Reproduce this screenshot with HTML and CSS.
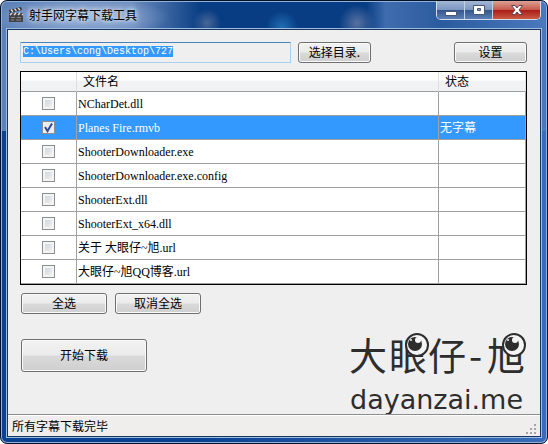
FILE: index.html
```html
<!DOCTYPE html>
<html lang="zh-CN">
<head>
<meta charset="utf-8">
<title>射手网字幕下载工具</title>
<link rel="stylesheet" href="styles.css">
</head>
<body>
<div class="window">
  <header class="titlebar">
    <svg class="app-icon" width="16" height="16" viewBox="0 0 16 16" aria-hidden="true">
      <path d="M1 3L13 0l1 3L2 6z" fill="#333"/>
      <path d="M3 2.6l2 2M6.500 1.800l2 2M10 1l2 2" stroke="#ddd" stroke-width="1.500"/>
      <path d="M1 6h14v9H1z" fill="#444"/>
      <path d="M2 8l2-2M6 8l2-2M10 8l2-2M14 8l1-1" stroke="#ddd" stroke-width="1.500"/>
      <path d="M3 10.500h4M9 10.500h4M3 13h3M8 13h5" stroke="#888"/>
    </svg>
    <h1 class="title">射手网字幕下载工具</h1>
    <div class="window-controls">
      <button class="control" type="button" aria-label="最小化">
        <svg width="12" height="12" viewBox="0 0 12 12"><path d="M.5 7.500h11v4H.5z" fill="#fff" stroke="#4b5677"/></svg>
      </button>
      <button class="control" type="button" aria-label="最大化">
        <svg width="12" height="12" viewBox="0 0 12 12"><path d="M.5 1.500h11v9H.5zM4.500 4.500v2h3v-2z" fill="#fff" fill-rule="evenodd" stroke="#4b5677"/></svg>
      </button>
      <button class="control control-close" type="button" aria-label="关闭">
        <svg width="12" height="12" viewBox="0 0 12 12"><path d="M.5 1.500h3.500l2 2.500 2-2.500h3.500L8 6l3.500 4.500H8L6 8l-2 2.500H.5L4 6z" fill="#fff" stroke="#5b4656"/></svg>
      </button>
    </div>
  </header>
  <div class="client">
    <main class="content">
      <div class="toolbar">
        <input class="path" id="path" type="text" aria-label="目录" value="C:\Users\cong\Desktop\727" spellcheck="false">
        <button class="button" type="button">选择目录.</button>
        <button class="button button-settings" type="button">设置</button>
      </div>
      <table class="files">
        <colgroup><col class="col-check"><col><col class="col-status"></colgroup>
        <thead><tr><th></th><th>文件名</th><th>状态</th></tr></thead>
        <tbody>
          <tr><td><input type="checkbox" aria-label="NCharDet.dll"></td><td>NCharDet.dll</td><td></td></tr>
          <tr class="selected"><td><input type="checkbox" checked aria-label="Planes Fire.rmvb"></td><td>Planes Fire.rmvb</td><td>无字幕</td></tr>
          <tr><td><input type="checkbox" aria-label="ShooterDownloader.exe"></td><td>ShooterDownloader.exe</td><td></td></tr>
          <tr><td><input type="checkbox" aria-label="ShooterDownloader.exe.config"></td><td>ShooterDownloader.exe.config</td><td></td></tr>
          <tr><td><input type="checkbox" aria-label="ShooterExt.dll"></td><td>ShooterExt.dll</td><td></td></tr>
          <tr><td><input type="checkbox" aria-label="ShooterExt_x64.dll"></td><td>ShooterExt_x64.dll</td><td></td></tr>
          <tr><td><input type="checkbox" aria-label="关于 大眼仔~旭.url"></td><td>关于 大眼仔~旭.url</td><td></td></tr>
          <tr><td><input type="checkbox" aria-label="大眼仔~旭QQ博客.url"></td><td>大眼仔~旭QQ博客.url</td><td></td></tr>
        </tbody>
      </table>
      <div class="lower">
        <div class="actions">
          <div class="select-actions">
            <button class="button button-medium" type="button">全选</button>
            <button class="button button-medium" type="button">取消全选</button>
          </div>
          <button class="button button-start" type="button">开始下载</button>
        </div>
        <svg class="logo" width="180" height="94" viewBox="0 0 180 94">
          <g class="logo-name">
            <text x="2" y="50">大</text>
            <text x="42" y="50">眼</text>
            <text x="81" y="50">仔</text>
            <text x="122" y="50">-</text>
            <text x="140" y="50">旭</text>
          </g>
          <g stroke="#2d2d2d" stroke-width="2" fill="#f4f4f4">
            <circle cx="70" cy="25" r="11"/>
            <circle cx="167" cy="25" r="11"/>
          </g>
          <g fill="#2d2d2d">
            <circle cx="68" cy="24" r="7"/>
            <circle cx="165" cy="24" r="7"/>
          </g>
          <g fill="#f4f4f4">
            <circle cx="71" cy="20" r="3"/>
            <circle cx="168" cy="20" r="3"/>
            <circle cx="64" cy="20" r="1"/>
            <circle cx="161" cy="20" r="1"/>
          </g>
          <text class="logo-site" x="3" y="89">dayanzai.me</text>
        </svg>
      </div>
    </main>
    <footer class="statusbar">
      <span>所有字幕下载完毕</span>
      <svg class="grip" width="12" height="12" viewBox="0 0 12 12" aria-hidden="true">
        <path d="M8 0h2v2H8zM4 4h2v2H4zM8 4h2v2H8zM0 8h2v2H0zM4 8h2v2H4zM8 8h2v2H8z" fill="#a8a4a4"/>
      </svg>
    </footer>
  </div>
</div>
<script src="app.js"></script>
</body>
</html>
```
FILE: styles.css
```css
* { box-sizing: border-box; }

body {
  margin: 0;
  background: #fff;
  color: #000;
  font: 12px/16px "Liberation Serif", "Noto Sans CJK SC", serif;
}

.window {
  display: flex;
  flex-direction: column;
  min-height: 100vh;
  padding: 0 6px 6px;
  border: 1px solid #061327;
  border-radius: 7px;
  background:
    radial-gradient(ellipse 90px 20px at 80px 16px, #a9bfdfcc, #a9bfdf00),
    radial-gradient(circle 14px at 206px 22px, #58719ccc, #58719c00),
    radial-gradient(circle 16px at 281px 26px, #2678bfcc, #2678bf00),
    radial-gradient(circle 18px at 356px 22px, #6b7ea8cc, #6b7ea800),
    linear-gradient(90deg, #5d82b8 0, #6c8cbe 130px, #083d83 200px, #083d83 365px, #3f6cad 385px, #2b5b9f 440px, #4a79bd 100%) top / 100% 130px no-repeat,
    linear-gradient(90deg, #0b4290 0, #0b4290 200px, #3a6cb8 100%);
  box-shadow: inset 0 0 0 1px #8fb1dc;
}

.titlebar {
  display: flex;
  align-items: flex-start;
  height: 28px;
}

.app-icon { margin: 6px 0 0 1px; }

.title {
  flex: 1;
  margin: 6px 0 0 5px;
  font: 12px/16px "Noto Sans CJK SC", sans-serif;
  text-shadow: 0 0 4px #fff, 0 0 7px #d7e4f5;
}

.window-controls {
  display: flex;
  border: 1px solid #d2dcea;
  border-top: 0;
  border-radius: 0 0 5px 5px;
  overflow: hidden;
}

.control {
  display: flex;
  align-items: center;
  justify-content: center;
  width: 28px;
  height: 18px;
  padding: 0;
  border: 0;
  border-right: 1px solid #c4d2e6;
  background: linear-gradient(#a4b7d4, #7c97c1 48%, #35578f 52%, #5c80b5);
}

.control-close {
  width: 47px;
  border-right: 0;
  background: linear-gradient(#dda196, #c9594d 48%, #a91e19 52%, #cc5a43);
}

.client {
  display: flex;
  flex: 1;
  flex-direction: column;
  border: 1px solid #17345f;
  background: #efefef;
  box-shadow: 0 0 0 1px #9ebbe0;
}

.content {
  flex: 1;
  padding: 12px 13px 0 12px;
}

.toolbar {
  display: flex;
  align-items: center;
  gap: 7px;
}

.path {
  flex: 0 1 271px;
  min-width: 0;
  height: 21px;
  padding: 0 2px 2px;
  border: 1px solid #a9d0ef;
  border-top-color: #4884b8;
  border-radius: 1px;
  outline: 0;
  background: #efefef;
  color: #000;
  font: 10px/14px "Liberation Mono", monospace;
}

.path::selection {
  background: #3399ff;
  color: #fff;
}

.button {
  width: 73px;
  height: 21px;
  padding: 0 0 2px;
  border: 1px solid #707070;
  border-radius: 3px;
  background: linear-gradient(#f2f2f2, #ebebeb 48%, #dadada 52%, #cfcfcf);
  box-shadow: inset 0 0 0 1px #fafafa;
  color: #000;
  font: 12px/16px "Noto Sans CJK SC", sans-serif;
}

.button-settings { margin-left: auto; }
.button-medium { width: 86px; }

.button-start {
  width: 126px;
  height: 33px;
}

.files {
  width: 100%;
  margin-top: 8px;
  border: 1px solid #000;
  border-spacing: 0;
  table-layout: fixed;
  background: #fff;
}

.col-check { width: 56px; }
.col-status { width: 87px; }

.files th {
  height: 20px;
  padding: 0 6px;
  border-right: 1px solid #dedfe1;
  border-bottom: 1px solid #a0a0a0;
  background: linear-gradient(#fff 40%, #f2f3f5 50%, #f0f1f3);
  font-weight: 400;
  text-align: left;
}

.files td {
  height: 24px;
  padding: 0 1px;
  border-right: 1px solid #a0a0a0;
  border-bottom: 1px solid #a0a0a0;
  white-space: nowrap;
}

.files td:first-child {
  font-size: 0;
  text-align: center;
}

.selected { background: #3399ff; }
.selected td { color: #fff; }

.files input {
  appearance: none;
  width: 13px;
  height: 13px;
  margin: 0;
  border: 1px solid #8e8f8f;
  background: linear-gradient(135deg, #cbcfd5, #f6f6f6);
  box-shadow: inset 0 0 0 2px #f4f4f4;
  vertical-align: middle;
}

.files input:checked {
  background: url("data:image/svg+xml,%3Csvg xmlns='http://www.w3.org/2000/svg' viewBox='0 0 11 11'%3E%3Cpath d='M2 5l2.500 4L9 1.500' fill='none' stroke='%23314a91' stroke-width='2'/%3E%3C/svg%3E") #eceef2;
  box-shadow: none;
}

.lower {
  display: flex;
  justify-content: space-between;
}

.actions {
  display: flex;
  flex-direction: column;
  gap: 25px;
  padding: 8px 0 0 1px;
}

.select-actions {
  display: flex;
  gap: 8px;
}

.logo {
  flex: none;
  margin-top: 35px;
  fill: #2d2d2d;
}

.logo-name {
  font: 38px "Noto Sans CJK SC", sans-serif;
}

.logo-site {
  font: 27px "DejaVu Sans", sans-serif;
}

.statusbar {
  display: flex;
  align-items: center;
  justify-content: space-between;
  height: 22px;
  padding: 0 2px 0 4px;
  border-top: 1px solid #8d8d8d;
  background: #f0eded;
  box-shadow: inset 0 1px #fff;
  font-family: "Noto Sans CJK SC", sans-serif;
}

.grip { align-self: flex-end; }
```
FILE: app.js
```js
const path = document.getElementById("path");
path.focus();
path.select();
```
